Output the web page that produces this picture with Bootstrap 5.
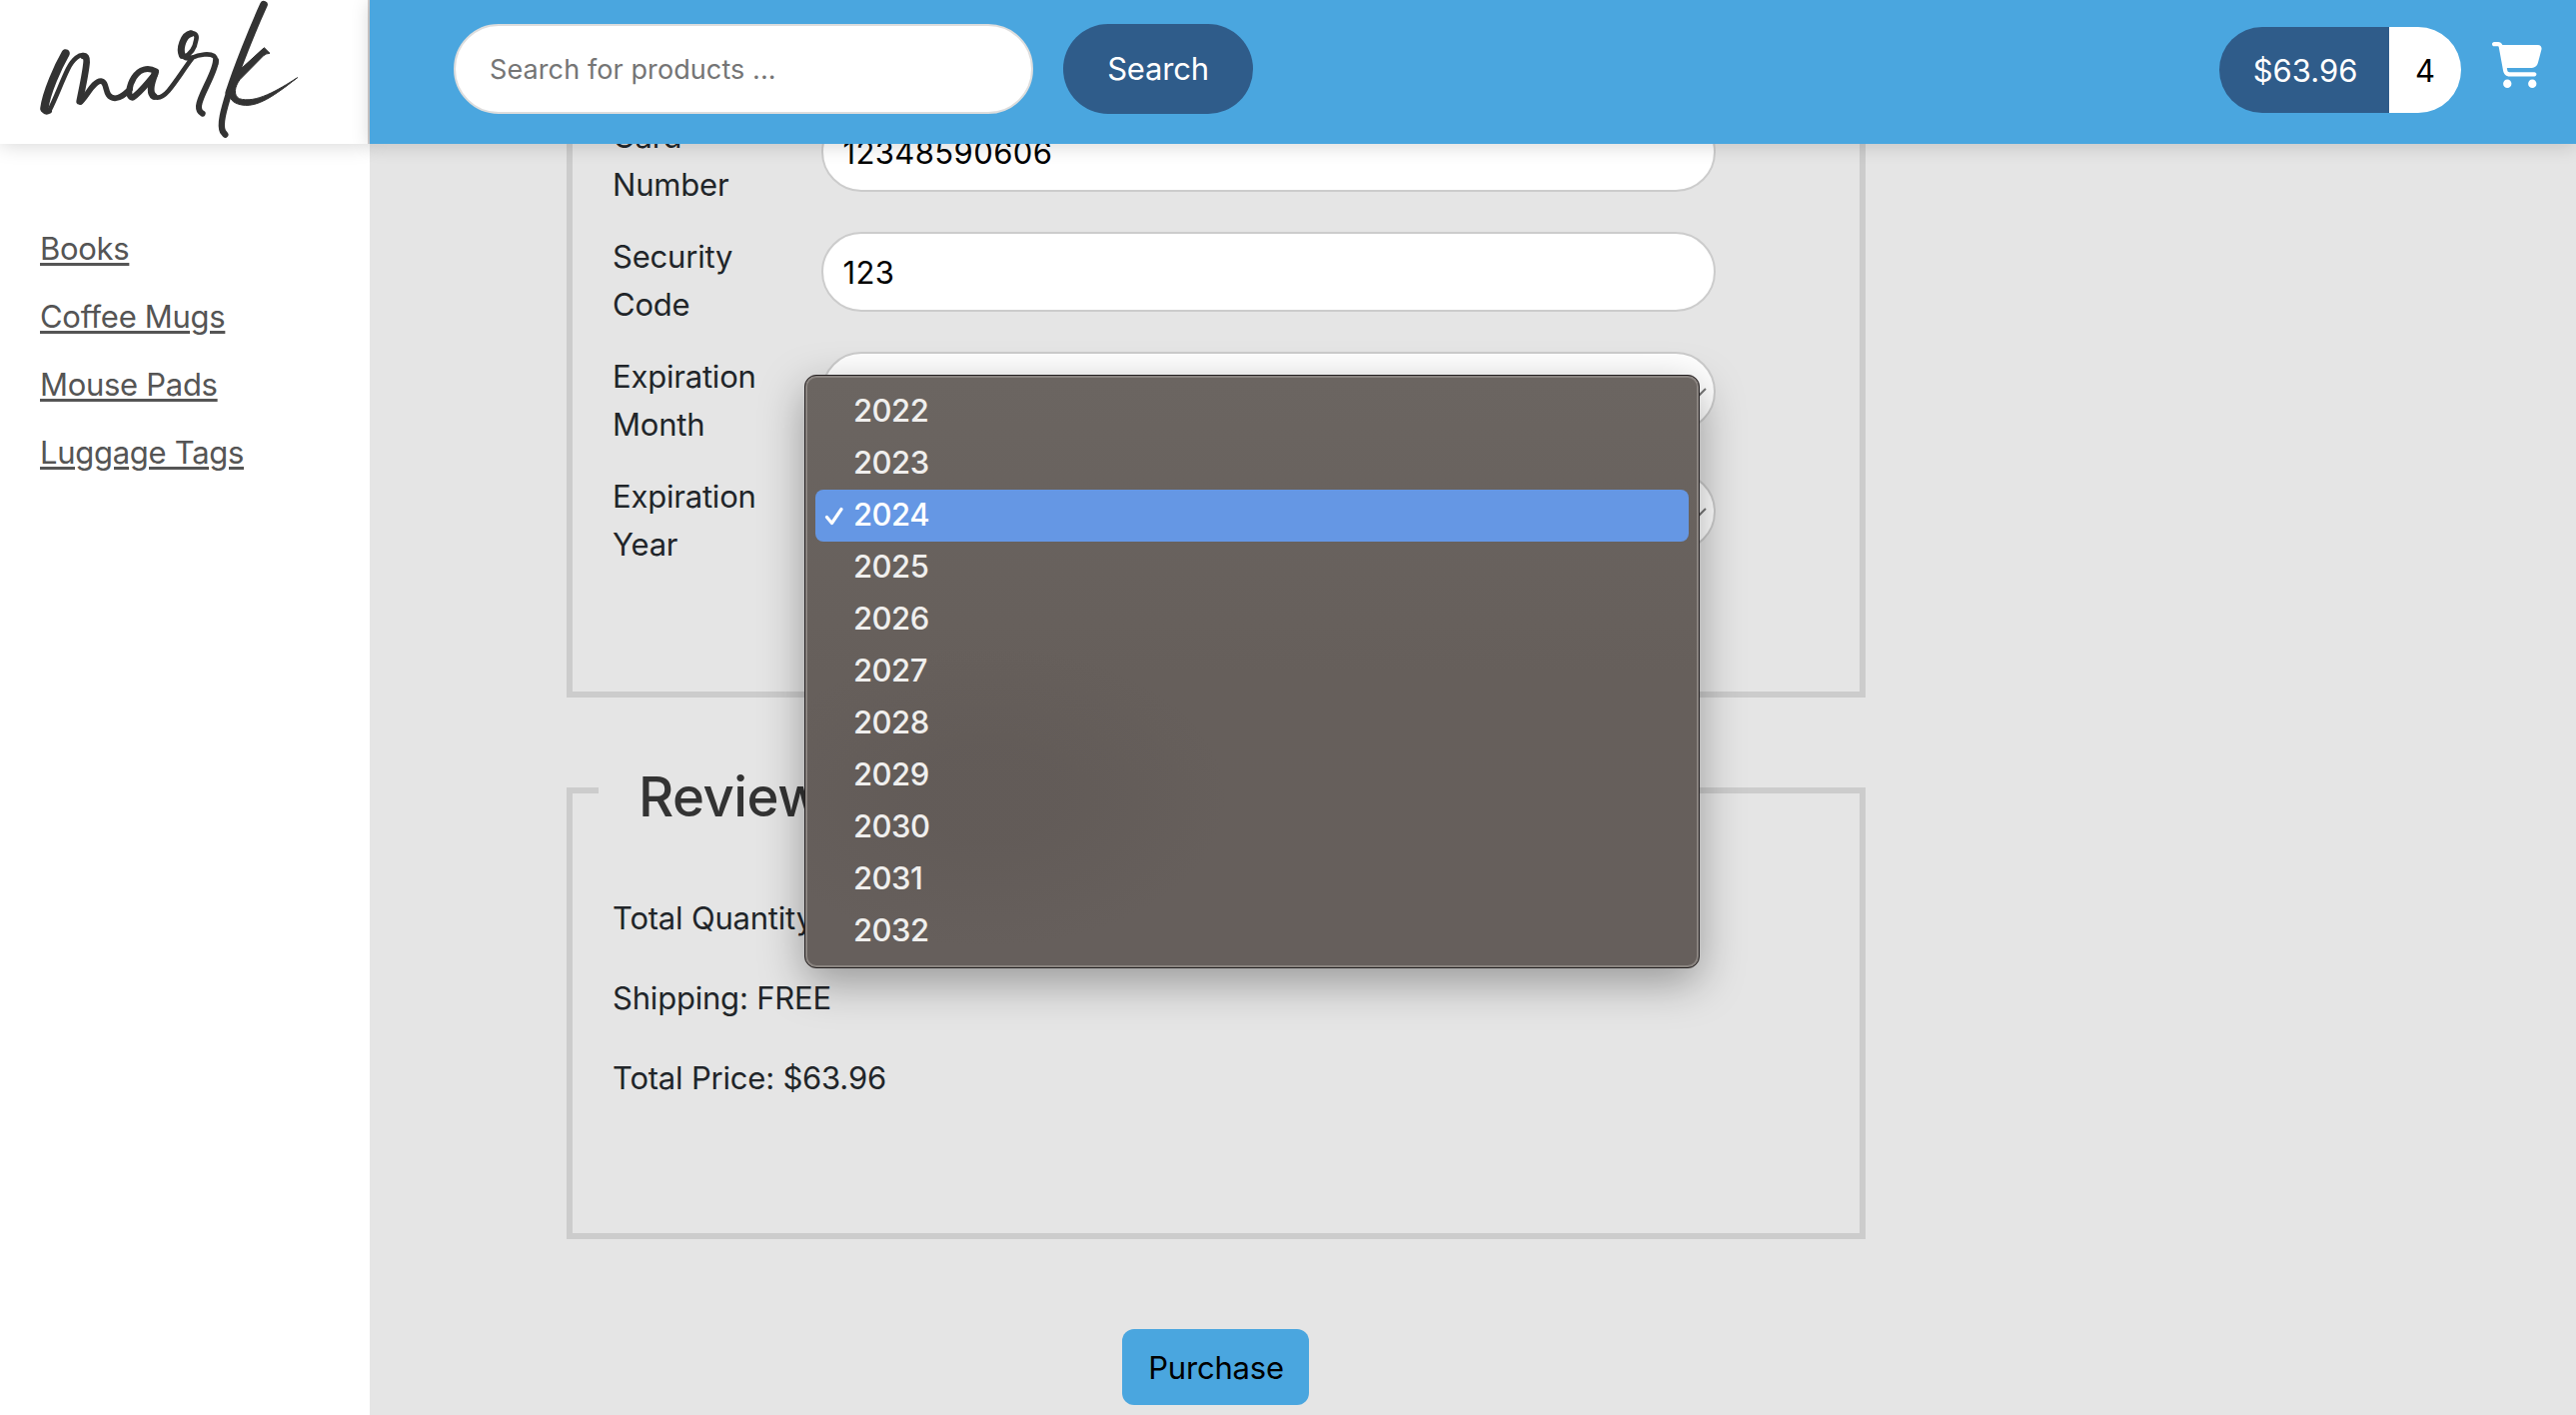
<!DOCTYPE html>
<html lang="en">
<head>
<meta charset="utf-8">
<meta name="viewport" content="width=device-width, initial-scale=1">
<title>Checkout</title>
<link href="https://cdn.jsdelivr.net/npm/bootstrap@5.3.0/dist/css/bootstrap.min.css" rel="stylesheet">
<style>
  body{font-family:Inter,"Liberation Sans",sans-serif;font-size:31px;line-height:48px;letter-spacing:-.2px;color:#212529;background:#e5e5e5;height:1416px}
  .brand-area,.side-menu{width:370px}
  .top-bar{height:144px;z-index:5}
  .brand-area{box-shadow:0 0 20px rgba(0,0,0,.18);background:#fff;border-right:2px solid #d3cfcf}
  .tool-area{background:#4aa6df;padding:0 34px 0 84px;box-shadow:0 2px 18px rgba(0,0,0,.16)}
  .search-box{width:580px;height:90px;margin:0 30px 6px 0;padding:0 34px;border:2px solid #ddd;border-radius:45px;font-size:27px;letter-spacing:.1px}
  .search-box::placeholder{color:#757575}
  .search-btn,.search-btn:hover{width:190px;height:90px;margin-bottom:6px;border:0;border-radius:45px;background:#2f5c8a;color:#fff;font-size:31px;letter-spacing:-.2px}
  .cart-status{height:86px;margin-bottom:4px;border-radius:43px;letter-spacing:0}
  .cart-sum{width:170px;background:#2f5c8a;color:#fff;padding:2px 0 0 2px}
  .cart-count{width:72px;background:#fff;color:#000;padding-top:2px}
  .cart-icon{width:50px;height:46px;margin:0 0 14px 31px}
  .side-menu{background:#fff;padding:71px 0 0 40px}
  .side-menu a{color:#555;line-height:68px;letter-spacing:-.3px;text-decoration-thickness:3px;text-underline-offset:3px}
  .page-main{height:1272px}
  .checkout-form{width:1300px;margin:-72px 0 0 197px}
  .form-section{border:6px solid #ccc;padding:0 40px;height:626px}
  .form-section.payment{padding-top:40px;border-top:0}
  .form-section.review{height:452px;margin-top:90px;border-top:0}
  .review-head{margin:0 -40px;height:58px}
  .rule-l{width:26px;height:6px;background:#ccc}
  .review-head h3{font-size:54.5px;font-weight:500;line-height:60px;color:#333;letter-spacing:-.5px;padding:0 40px;margin:-21px 0 0}
  .form-line{height:96px;margin-bottom:24px}
  .form-line label{width:208.5px;padding:1px 60px 0 0}
  .field-box{width:895px;height:80px;border:2px solid #ccc;border-radius:40px;padding:0 20px;font-size:31px;letter-spacing:.4px;color:#000;background:#fff}
  .chev{right:7px;top:34px;width:26px;height:15px}
  .totals{padding-top:49px}
  .totals p{margin:0 0 32px}
  .buy-btn,.buy-btn:hover{width:187px;height:76px;margin:90px 0 0 556px;border:0;border-radius:12px;background:#4aa6df;color:#000;font-size:31px;letter-spacing:-.2px;padding:2px 0 0 1px}
  .year-menu{left:805px;top:375px;width:896px;height:594px;z-index:9;padding:8px 8px 0;border:3px solid #8a8480;border-radius:12px;box-shadow:0 14px 44px rgba(0,0,0,.34);
    background:radial-gradient(ellipse 240px 150px at 180px 420px,rgba(90,83,80,.3) 30%,rgba(90,83,80,0)),linear-gradient(#6b6561,#665f5b 50%,#665f5c)}
  .year-menu::before{content:"";position:absolute;inset:-3px;border:1px solid #231f20;border-radius:12px;pointer-events:none}
  .year-menu li{height:52px;line-height:49px;padding-left:38px;border-radius:8px;font-weight:500;color:#f0efee;letter-spacing:-.5px;position:relative}
  .year-menu li.picked{background:#6597e4;color:#fff}
  .tick{left:9px;top:17px;width:20px;height:20px}
</style>
</head>
<body class="overflow-hidden position-relative">
<header class="top-bar d-flex position-relative">
  <div class="brand-area flex-shrink-0">
    <svg width="368" height="144" viewBox="0 0 1104 432" fill="none" stroke="#333" stroke-linecap="round" stroke-linejoin="round" role="img" aria-label="mark">
      <path stroke-width="25" d="M197,160C174,200 139,278 133,326"/>
      <path stroke-width="18" d="M132,330Q138,338 147,333"/>
      <path stroke-width="14" d="M148,332C166,298 184,248 204,207C219,177 240,161 253,166"/>
      <path stroke-width="20" d="M251,168Q261,169 260,186C258,213 247,266 239,304"/>
      <path stroke-width="17" d="M242,306C264,284 280,244 303,243C326,246 310,293 345,295C365,294 377,280 390,268"/>
      <path stroke-width="18" d="M468,214C444,201 419,207 402,233C386,259 382,292 398,293C423,277 444,246 465,224"/>
      <path stroke-width="21" d="M466,218C455,246 446,278 462,289"/>
      <path stroke-width="14" d="M462,290C477,298 492,288 506,272C528,246 550,210 576,176"/>
      <path stroke-width="21" d="M547,166C538,145 551,105 573,101"/>
      <path stroke-width="14" d="M571,99Q594,99 589,119C585,144 574,163 552,171Q560,178 576,173"/>
      <path stroke-width="14" d="M575,174C600,162 630,160 642,168Q651,176 648,194"/>
      <path stroke-width="18" d="M648,182C646,220 599,287 597,318C596,330 601,337 608,341"/>
      <path stroke-width="23" d="M792,14C759,86 711,205 688,278"/>
      <path stroke-width="19" d="M690,270C671,332 659,373 669,395L676,404"/>
      <path stroke-width="10" d="M722,215L792,150"/>
      <path fill="#333" stroke-width="3" d="M794,144L810,160Q800,160 791,167L721,238C704,260 700,286 718,296C767,312 835,270 893,233C840,274 791,312 748,316C716,318 693,306 690,289L705,224Z"/>
    </svg>
  </div>
  <div class="tool-area d-flex align-items-center flex-grow-1">
    <input class="search-box" type="text" placeholder="Search for products ...">
    <button class="btn search-btn" type="button">Search</button>
    <div class="cart-status d-flex overflow-hidden ms-auto">
      <div class="cart-sum d-flex align-items-center justify-content-center">$63.96</div>
      <div class="cart-count d-flex align-items-center justify-content-center">4</div>
    </div>
    <svg class="cart-icon" viewBox="0 0 576 512" preserveAspectRatio="none" fill="#fff" aria-label="Cart"><path d="M0 24C0 10.700 10.700 0 24 0H69.500c22 0 41.500 12.800 50.600 32h411c26.300 0 45.500 25 38.600 50.400l-41 152.300c-8.500 31.400-37 53.300-69.500 53.300H170.700l5.400 28.500c2.200 11.300 12.100 19.500 23.600 19.500H488c13.300 0 24 10.700 24 24s-10.700 24-24 24H199.700c-34.600 0-64.300-24.600-70.700-58.500L77.400 54.500c-.7-3.800-4-6.500-7.900-6.500H24C10.700 48 0 37.300 0 24zM128 464a48 48 0 1 1 96 0 48 48 0 1 1-96 0zm336-48a48 48 0 1 1 0 96 48 48 0 1 1 0-96z"/></svg>
  </div>
</header>

<div class="d-flex">
  <nav class="side-menu page-main flex-shrink-0">
    <ul class="list-unstyled m-0">
      <li><a href="#">Books</a></li>
      <li><a href="#">Coffee Mugs</a></li>
      <li><a href="#">Mouse Pads</a></li>
      <li><a href="#">Luggage Tags</a></li>
    </ul>
  </nav>
  <main class="page-main flex-grow-1 overflow-hidden">
    <form class="checkout-form">
      <section class="form-section payment">
        <div class="form-line d-flex"><label for="num">Card Number</label><input id="num" class="field-box" value="12348590606"></div>
        <div class="form-line d-flex"><label for="code">Security Code</label><input id="code" class="field-box" value="123"></div>
        <div class="form-line d-flex"><label>Expiration Month</label>
          <div class="field-box position-relative"><svg class="chev position-absolute" viewBox="0 0 26 15" fill="none" stroke="#777" stroke-width="2"><path d="M1 1 13 13 25 1"/></svg></div></div>
        <div class="form-line d-flex"><label>Expiration Year</label>
          <div class="field-box position-relative"><svg class="chev position-absolute" viewBox="0 0 26 15" fill="none" stroke="#777" stroke-width="2"><path d="M1 1 13 13 25 1"/></svg></div></div>
      </section>
      <section class="form-section review">
        <div class="review-head d-flex align-items-start">
          <div class="rule-l"></div><h3>Review</h3><div class="rule-l flex-grow-1"></div>
        </div>
        <div class="totals">
          <p>Total Quantity</p>
          <p>Shipping: FREE</p>
          <p>Total Price: $63.96</p>
        </div>
      </section>
      <button class="btn buy-btn" type="button">Purchase</button>
    </form>
  </main>
</div>

<ul class="year-menu list-unstyled position-absolute m-0">
  <li>2022</li>
  <li>2023</li>
  <li class="picked"><svg class="tick position-absolute" viewBox="0 0 20 20" fill="none" stroke="#fff" stroke-width="3.200" stroke-linecap="round" stroke-linejoin="round"><path d="M2.500 10.500 7.500 16.500 17 2.500"/></svg>2024</li>
  <li>2025</li>
  <li>2026</li>
  <li>2027</li>
  <li>2028</li>
  <li>2029</li>
  <li>2030</li>
  <li>2031</li>
  <li>2032</li>
</ul>
<script src="https://cdn.jsdelivr.net/npm/bootstrap@5.3.0/dist/js/bootstrap.bundle.min.js"></script>
</body>
</html>
